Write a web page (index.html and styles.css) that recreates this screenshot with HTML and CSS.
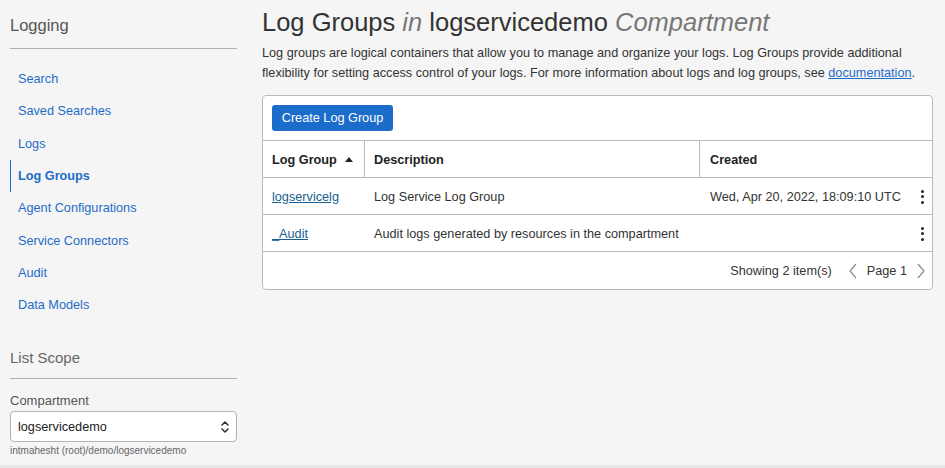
FILE: index.html
```html
<!DOCTYPE html>
<html>
<head>
<meta charset="utf-8">
<link rel="stylesheet" href="styles.css">
</head>
<body>
<div class="page">
  <aside class="sidebar">
    <div class="side-title">Logging</div>
    <nav class="nav">
      <a class="nav-item">Search</a>
      <a class="nav-item">Saved Searches</a>
      <a class="nav-item">Logs</a>
      <a class="nav-item active">Log Groups</a>
      <a class="nav-item">Agent Configurations</a>
      <a class="nav-item">Service Connectors</a>
      <a class="nav-item">Audit</a>
      <a class="nav-item">Data Models</a>
    </nav>
    <div class="scope-title">List Scope</div>
    <div class="field-label">Compartment</div>
    <div class="select">
      <span>logservicedemo</span>
      <svg class="updown" width="10" height="14" viewBox="0 0 10 14"><path d="M2 5 L5 2 L8 5 M2 9 L5 12 L8 9" fill="none" stroke="#333" stroke-width="1.6" stroke-linecap="round" stroke-linejoin="round"/></svg>
    </div>
    <div class="hint">intmahesht (root)/demo/logservicedemo</div>
  </aside>
  <main class="main">
    <h1 class="title">Log Groups <em>in</em> logservicedemo <em>Compartment</em></h1>
    <p class="desc">Log groups are logical containers that allow you to manage and organize your logs. Log Groups provide additional flexibility for setting access control of your logs. For more information about logs and log groups, see <a class="doc-link">documentation</a>.</p>
    <div class="panel">
      <div class="toolbar"><button class="btn">Create Log Group</button></div>
      <div class="grid">
        <div class="th c1">Log Group <svg class="sort" width="8" height="5" viewBox="0 0 8 5"><path d="M0 5 L4 0 L8 5 Z" fill="#222"/></svg></div>
        <div class="th c2">Description</div>
        <div class="th c3">Created</div>

        <div class="td c1"><a class="row-link">logservicelg</a></div>
        <div class="td c2">Log Service Log Group</div>
        <div class="td c3"><span>Wed, Apr 20, 2022, 18:09:10 UTC</span><span class="kebab"><i></i><i></i><i></i></span></div>

        <div class="td c1"><a class="row-link">_Audit</a></div>
        <div class="td c2">Audit logs generated by resources in the compartment</div>
        <div class="td c3"><span></span><span class="kebab"><i></i><i></i><i></i></span></div>
      </div>
      <div class="footer">
        <span class="showing">Showing 2 item(s)</span>
        <svg class="chev" width="10" height="16" viewBox="0 0 10 16"><path d="M8 1 L2 8 L8 15" fill="none" stroke="#8a8a8a" stroke-width="1.2"/></svg>
        <span>Page 1</span>
        <svg class="chev" width="10" height="16" viewBox="0 0 10 16"><path d="M2 1 L8 8 L2 15" fill="none" stroke="#8a8a8a" stroke-width="1.2"/></svg>
      </div>
    </div>
  </main>
</div>
</body>
</html>
```

FILE: styles.css
```css
* { box-sizing: border-box; }
html, body { margin: 0; padding: 0; }
body {
  background: #f5f5f5;
  font-family: "Liberation Sans", Arial, sans-serif;
  color: #333;
  font-size: 12.7px;
}
.page {
  display: flex;
  height: 468px;
  border-bottom: 3px solid #e6e6e6;
  gap: 25px;
}
.sidebar {
  width: 237px;
  padding-left: 10px;
  flex-shrink: 0;
}
.side-title {
  font-size: 16.5px;
  color: #555;
  height: 49px;
  padding-top: 16px;
  border-bottom: 1px solid #b0b0b0;
}
.nav {
  display: flex;
  flex-direction: column;
  padding-top: 14px;
}
.nav-item {
  height: 32.3px;
  display: flex;
  align-items: center;
  padding-left: 7px;
  border-left: 1px solid transparent;
  color: #1f6cc6;
}
.nav-item.active {
  border-left-color: #1f6cc6;
  font-weight: bold;
}
.scope-title {
  margin-top: 28px;
  font-size: 15px;
  color: #666;
  height: 30px;
  border-bottom: 1px solid #b0b0b0;
}
.field-label {
  margin-top: 14px;
  color: #555;
  height: 18px;
  font-size: 13px;
}
.select {
  height: 31px;
  background: #fff;
  border: 1px solid #b3b3b3;
  border-radius: 4px;
  display: flex;
  align-items: center;
  justify-content: space-between;
  padding: 0 6px 0 7px;
  color: #222;
}
.hint {
  margin-top: 3px;
  font-size: 10px;
  color: #666;
}
.main {
  flex: 1;
  padding-right: 12px;
}
.title {
  margin: 0;
  padding-top: 7px;
  font-size: 25.5px;
  font-weight: normal;
  color: #333;
  line-height: 30px;
}
.title em { color: #777; }
.desc {
  margin: 6px 0 0;
  line-height: 20px;
  color: #333;
}
.doc-link { color: #1f6cc6; text-decoration: underline; }
.panel {
  margin-top: 12px;
  background: #fff;
  border: 1px solid #b8bcc2;
  border-radius: 4px;
}
.toolbar {
  height: 45px;
  padding: 9px 9px 0;
  border-bottom: 1px solid #b8bcc2;
}
.btn {
  height: 26px;
  width: 121px;
  padding: 0;
  background: #1b6ccb;
  color: #fff;
  border: none;
  border-radius: 3px;
  font-family: inherit;
  font-size: 12.7px;
}
.grid {
  display: grid;
  grid-template-columns: 102px 335px 1fr;
}
.th, .td {
  height: 37px;
  border-bottom: 1px solid #b8bcc2;
  display: flex;
  align-items: center;
  padding-left: 9px;
  padding-top: 1px;
}
.th { font-weight: bold; color: #222; }
.th.c1, .th.c2 { border-right: 1px solid #b8bcc2; }
.th.c3 { padding-left: 10px; }
.sort { margin-left: 8px; }
.td.c3 { justify-content: space-between; padding-right: 8px; padding-left: 10px; }
.row-link { color: #165f8e; text-decoration: underline; }
.kebab {
  display: flex;
  flex-direction: column;
  gap: 2.5px;
}
.kebab i {
  width: 3px;
  height: 3px;
  border-radius: 50%;
  background: #222;
}
.footer {
  height: 37px;
  display: flex;
  align-items: center;
  justify-content: flex-end;
  padding-right: 6px;
  padding-top: 1px;
  gap: 9px;
}
.showing { margin-right: 7px; }
```
